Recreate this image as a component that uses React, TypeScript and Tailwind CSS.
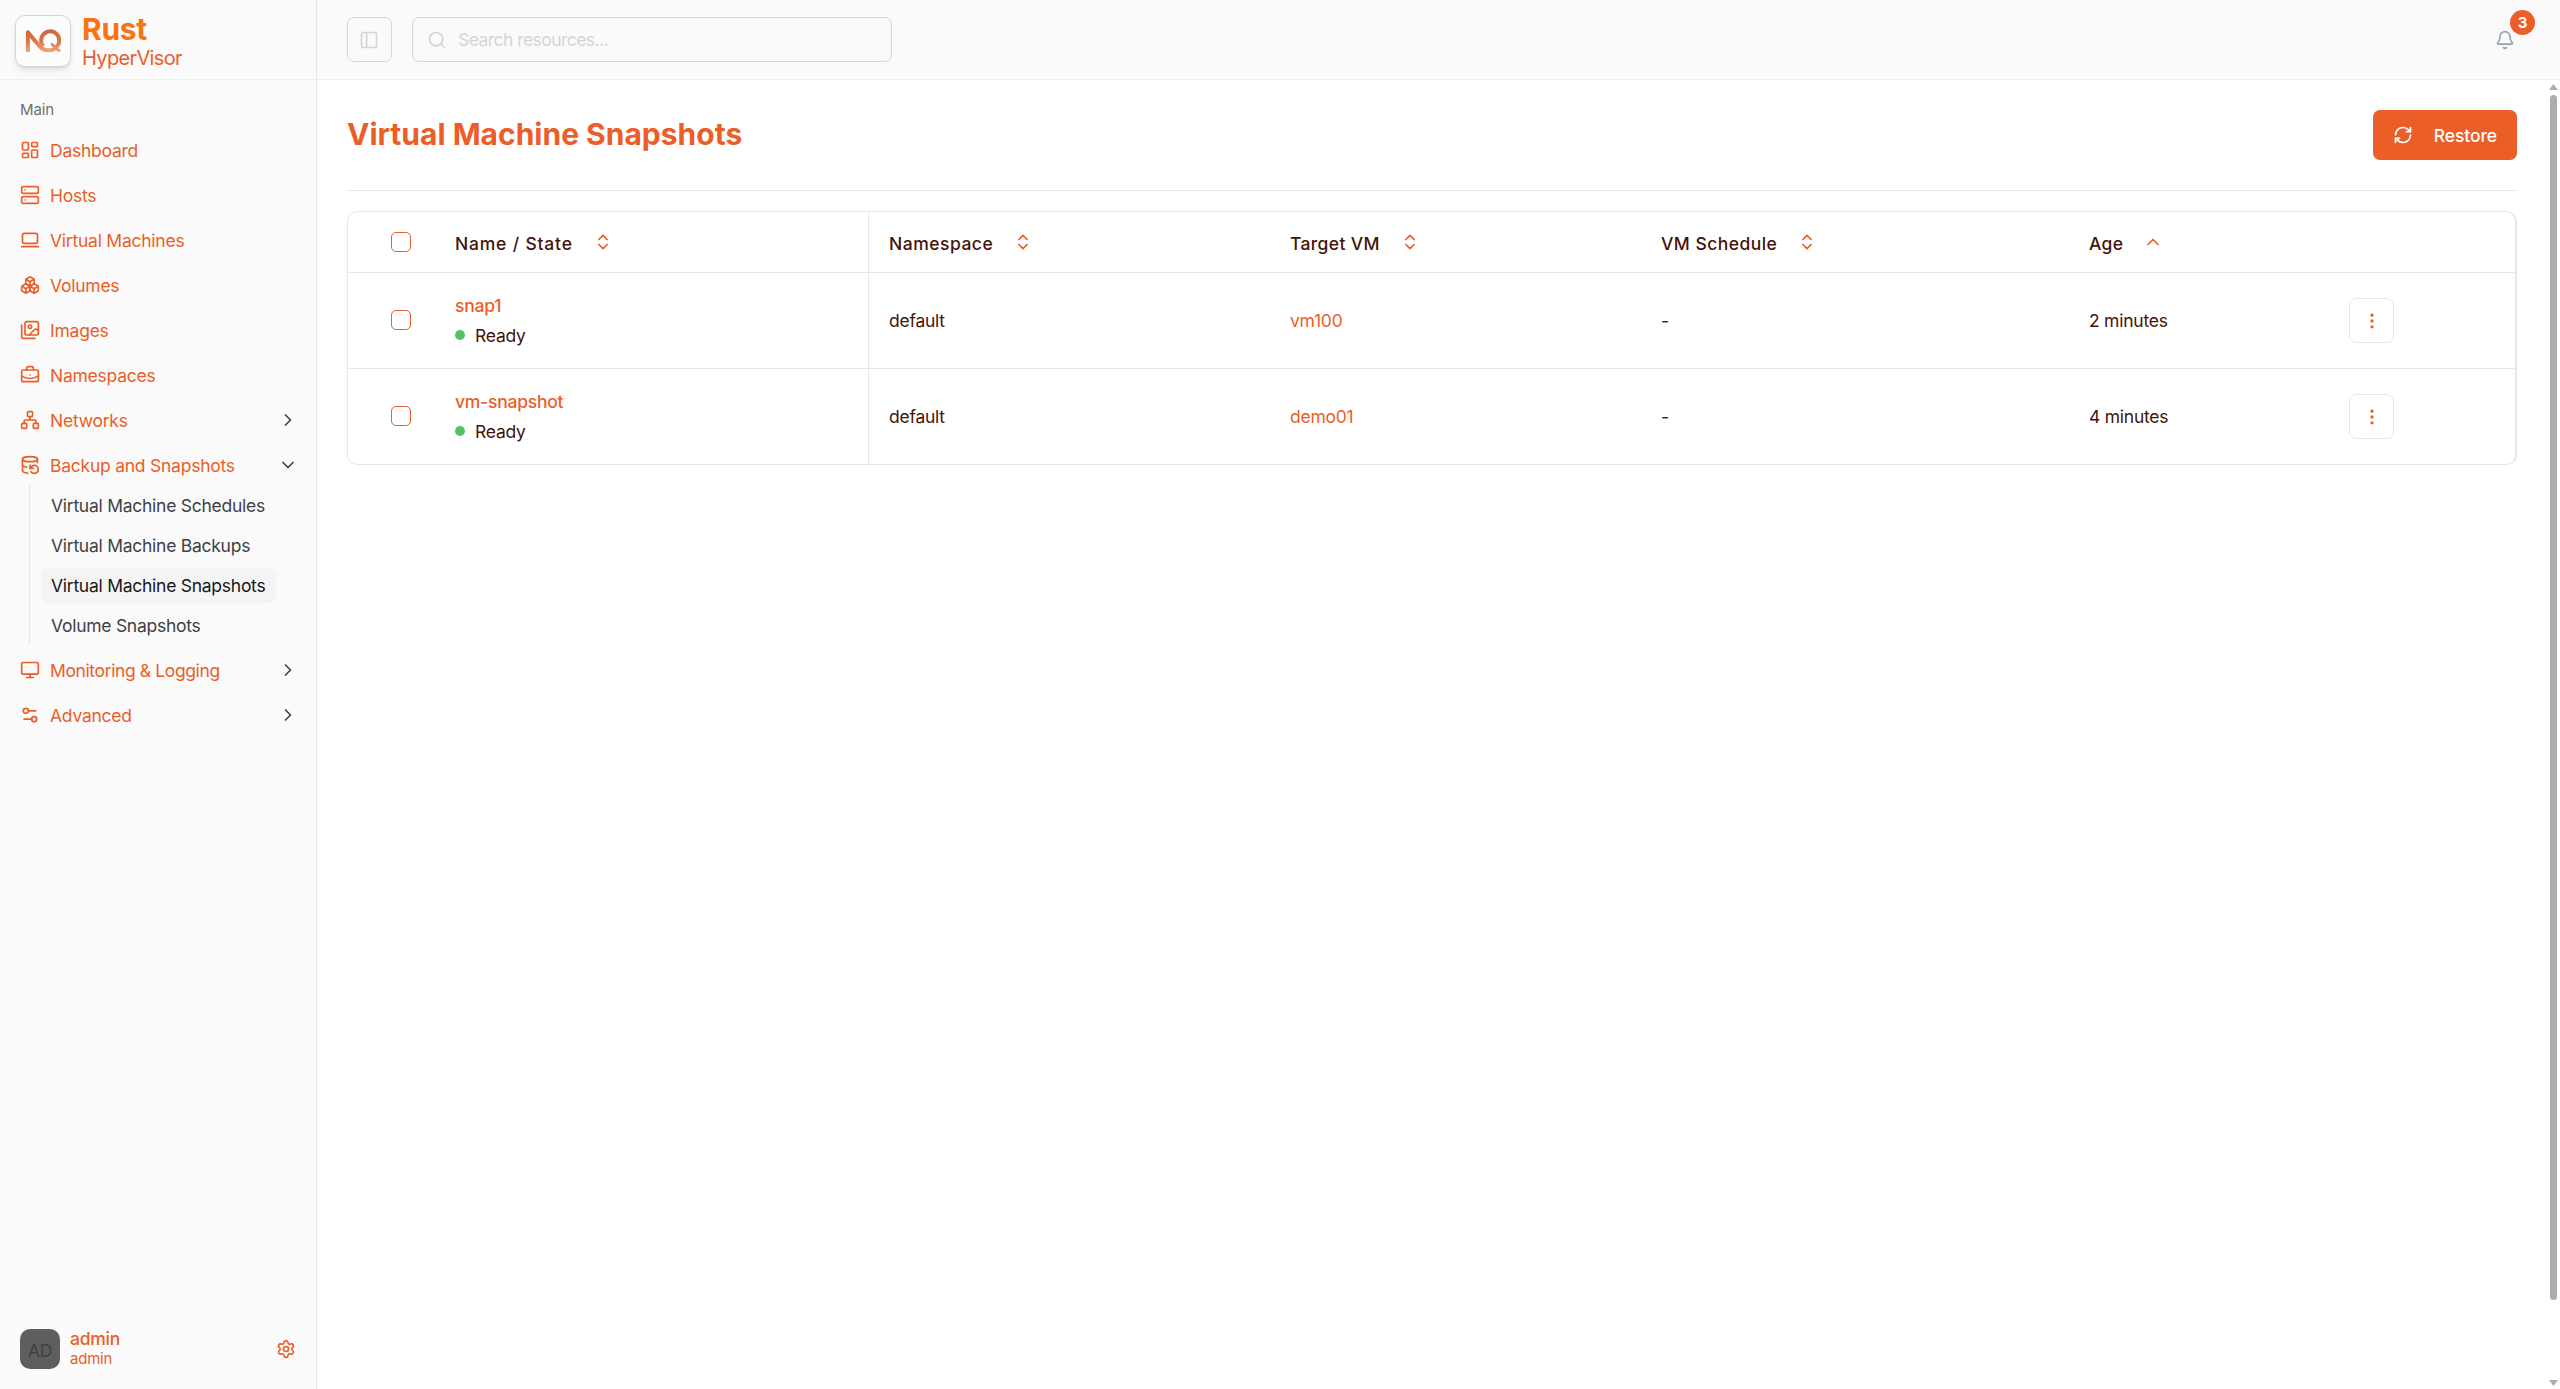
import React, { useState } from "react";
import {
  Bell,
  Boxes,
  BriefcaseBusiness,
  ChevronDown,
  ChevronRight,
  ChevronsUpDown,
  ChevronUp,
  DatabaseBackup,
  EllipsisVertical,
  LaptopMinimal,
  LayoutDashboard,
  Monitor,
  Network,
  PanelLeft,
  RefreshCw,
  Search,
  Server,
  Settings,
  Settings2,
} from "lucide-react";

interface NavItem {
  label: string;
  icon: React.ElementType;
  children?: string[];
  expandable?: boolean;
}

interface Snapshot {
  name: string;
  state: string;
  namespace: string;
  target: string;
  schedule: string;
  age: string;
}

const ImagesIcon = ({ className }: { className?: string }) => (
  <svg
    className={className}
    viewBox="0 0 24 24"
    fill="none"
    stroke="currentColor"
    strokeWidth={2}
    strokeLinecap="round"
    strokeLinejoin="round"
  >
    <path d="M18 22H4a2 2 0 0 1-2-2V6" />
    <path d="m22 13-1.296-1.296a2.41 2.41 0 0 0-3.408 0L11 18" />
    <circle cx="12" cy="8" r="2" />
    <rect width="16" height="16" x="6" y="2" rx="2" />
  </svg>
);

const navItems: NavItem[] = [
  { label: "Dashboard", icon: LayoutDashboard },
  { label: "Hosts", icon: Server },
  { label: "Virtual Machines", icon: LaptopMinimal },
  { label: "Volumes", icon: Boxes },
  { label: "Images", icon: ImagesIcon },
  { label: "Namespaces", icon: BriefcaseBusiness },
  { label: "Networks", icon: Network, expandable: true },
  {
    label: "Backup and Snapshots",
    icon: DatabaseBackup,
    children: [
      "Virtual Machine Schedules",
      "Virtual Machine Backups",
      "Virtual Machine Snapshots",
      "Volume Snapshots",
    ],
  },
  { label: "Monitoring & Logging", icon: Monitor, expandable: true },
  { label: "Advanced", icon: Settings2, expandable: true },
];

const columns = [
  { label: "Name / State", tracking: "tracking-[0.8px]" },
  { label: "Namespace", tracking: "tracking-[0.5px]" },
  { label: "Target VM", tracking: "tracking-[0.35px]" },
  { label: "VM Schedule", tracking: "tracking-[0.45px]" },
  { label: "Age", tracking: "tracking-[0.3px]" },
];

const snapshots: Snapshot[] = [
  { name: "snap1", state: "Ready", namespace: "default", target: "vm100", schedule: "-", age: "2 minutes" },
  { name: "vm-snapshot", state: "Ready", namespace: "default", target: "demo01", schedule: "-", age: "4 minutes" },
];

const Logo = () => (
  <div className="flex h-[52px] w-14 items-center justify-center rounded-[10px] border border-gray-300 bg-[#fcfcfc] shadow-md">
    <svg className="h-6 w-9" viewBox="0 0 36 24" fill="none" strokeWidth="4">
      <defs>
        <linearGradient id="logo" gradientUnits="userSpaceOnUse" x1="0" y1="0" x2="0" y2="24">
          <stop offset="0" stopColor="#cf6435" />
          <stop offset="0.5" stopColor="#dc7646" />
          <stop offset="1" stopColor="#f0a880" />
        </linearGradient>
      </defs>
      <path
        d="M2.9 23V3.2L14.5 17.2C17.5 20.8 20.3 21.6 24.5 21.3"
        stroke="url(#logo)"
        strokeLinejoin="round"
      />
      <path
        d="M18.2 17.2A9.1 9.1 0 1 1 32 17.4C30.2 19.8 27.6 21.3 24.5 21.3"
        stroke="url(#logo)"
      />
      <path d="M26 15.2C28.5 15.4 30.4 20.4 35.2 22.1" stroke="url(#logo)" strokeWidth="2.8" />
    </svg>
  </div>
);

const Sidebar = () => {
  const [active, setActive] = useState("Virtual Machine Snapshots");

  return (
    <aside className="flex w-[317px] shrink-0 flex-col border-r border-[#e5e5e5] bg-[#fafafa]">
      <div className="flex h-20 shrink-0 items-center gap-[11px] border-b border-[#ededed] pl-[15px]">
        <div className="pt-[3px]">
          <Logo />
        </div>
        <div className="pt-[7px]">
          <div className="text-[30px] leading-[30px] font-bold tracking-[-0.3px] text-[#f97310]">Rust</div>
          <div className="text-[20px] leading-[28px] tracking-[-0.65px]">HyperVisor</div>
        </div>
      </div>
      <nav className="grow px-[10px] pt-[9px]">
        <div className="flex h-10 items-center px-[10px] text-[15px] tracking-[-0.1px] text-[#707070]">Main</div>
        <ul className="mt-[1px] flex flex-col gap-[5px]">
          {navItems.map(({ label, icon: Icon, children, expandable }) => (
            <li key={label}>
              <button className="flex h-10 w-full items-center gap-[10px] px-[10px] text-left">
                <Icon className="size-5 shrink-0" />
                <span className={label.startsWith("Monitoring") ? "grow tracking-[-0.38px]" : "grow"}>{label}</span>
                {children && <ChevronDown className="mr-[-2px] size-5 text-[#3f3f46]" />}
                {expandable && <ChevronRight className="mr-[-2px] size-5 text-[#3f3f46]" />}
              </button>
              {children && (
                <ul className="ml-[19px] flex w-[247px] flex-col gap-[5px] border-l border-[#e5e5e5] py-[2.5px] pl-[11px]">
                  {children.map((child) => (
                    <li key={child}>
                      <button
                        className={`flex h-[35px] w-full items-center rounded-[7px] px-[10px] pt-[1px] tracking-[-0.26px] whitespace-nowrap ${
                          active === child ? "bg-[#f4f4f5] text-[#18181b]" : "text-[#3f3f46]"
                        }`}
                        onClick={() => setActive(child)}
                      >
                        {child}
                      </button>
                    </li>
                  ))}
                </ul>
              )}
            </li>
          ))}
        </ul>
      </nav>
      <div className="flex items-center gap-[10px] p-5">
        <div className="flex size-10 items-center justify-center rounded-[10px] bg-[#5e5e5e] pt-[2px] text-[#414141]">AD</div>
        <div className="grow">
          <div className="leading-5 font-medium">admin</div>
          <div className="text-[15px] leading-5">admin</div>
        </div>
        <Settings className="size-5" />
      </div>
    </aside>
  );
};

const Header = () => (
  <header className="flex h-20 shrink-0 items-center border-b border-[#ededed] bg-[#fafafa] pr-[25px] pl-[30px]">
    <button className="flex size-[45px] items-center justify-center rounded-[7px] border border-gray-300 pr-[1px] text-gray-300">
      <PanelLeft className="size-5" />
    </button>
    <div className="ml-5 flex h-[45px] w-[480px] items-center gap-[11px] rounded-[7px] border border-gray-300 pl-[14px] text-gray-300">
      <Search className="size-5" />
      <input
        className="grow bg-transparent tracking-[-0.55px] outline-none placeholder:text-gray-300"
        placeholder="Search resources..."
      />
    </div>
    <button className="relative mr-5 ml-auto text-gray-400">
      <Bell className="size-5" />
      <span className="absolute -top-5 left-[15px] flex size-[25px] items-center justify-center rounded-full bg-[#eb5e28] text-[15px] font-bold text-white">
        3
      </span>
    </button>
  </header>
);

const Checkbox = () => (
  <input
    type="checkbox"
    className="block size-5 appearance-none rounded-[5px] border border-[#eb5e28] checked:bg-[#eb5e28]"
  />
);

const SnapshotTable = () => (
  <div className="mt-5 overflow-hidden rounded-[10px] border border-r-2 border-slate-200">
    <table className="w-full table-fixed border-separate border-spacing-0 text-left text-[#431407]">
      <colgroup>
        <col className="w-[87px]" />
        <col className="w-[434px]" />
        <col className="w-[401px]" />
        <col className="w-[371px]" />
        <col className="w-[428px]" />
        <col className="w-[260px]" />
        <col />
      </colgroup>
      <thead>
        <tr className="h-[61px]">
          <th className="border-b border-slate-200 pl-[43px]">
            <Checkbox />
          </th>
          {columns.map(({ label, tracking }) => (
            <th key={label} className="border-b border-slate-200 px-5 font-medium nth-2:border-r">
              <div className="flex items-center gap-5">
                <span className={`relative top-[1px] ${tracking}`}>{label}</span>
                {label === "Age" ? (
                  <ChevronUp className="size-5 text-[#eb5e28]" />
                ) : (
                  <ChevronsUpDown className="size-5 text-[#eb5e28]" />
                )}
              </div>
            </th>
          ))}
          <th className="border-b border-slate-200" />
        </tr>
      </thead>
      <tbody className="[&>tr:last-child>td]:border-b-0">
        {snapshots.map((snapshot) => (
          <tr key={snapshot.name} className="h-24 last:h-[95px]">
            <td className="border-b border-slate-200 pb-[1px] pl-[43px]">
              <Checkbox />
            </td>
            <td className="border-r border-b border-slate-200 px-5">
              <div className="leading-[25px] font-medium text-[#eb5e28]">{snapshot.name}</div>
              <div className="mt-[5px] flex items-center gap-[10px] leading-[25px]">
                <span className="mb-[1px] size-[10px] rounded-full bg-[#4fc460]" />
                {snapshot.state}
              </div>
            </td>
            <td className="border-b border-slate-200 px-5">{snapshot.namespace}</td>
            <td className="border-b border-slate-200 px-5 text-[#eb5e28]">{snapshot.target}</td>
            <td className="border-b border-slate-200 px-5">{snapshot.schedule}</td>
            <td className="border-b border-slate-200 px-5">{snapshot.age}</td>
            <td className="border-b border-slate-200 px-5">
              <button className="flex size-[45px] items-center justify-center rounded-[7px] border border-slate-200 text-[#eb5e28]">
                <EllipsisVertical className="size-5" />
              </button>
            </td>
          </tr>
        ))}
      </tbody>
    </table>
  </div>
);

const ScrollBar = () => (
  <div className="flex w-[13px] shrink-0 flex-col items-center pt-1 pb-[3px]">
    <svg className="h-[6px] w-[9px] fill-[#adadad]" viewBox="0 0 9 6">
      <path d="M4.5 0 9 6H0z" />
    </svg>
    <div className="mt-[5px] h-[1205px] w-[7px] rounded-full bg-[#adadad]" />
    <svg className="mt-auto h-[6px] w-[9px] fill-[#adadad]" viewBox="0 0 9 6">
      <path d="M0 0H9L4.5 6z" />
    </svg>
  </div>
);

const App = () => {
  return (
    <div className="flex h-screen bg-white font-[Inter,sans-serif] text-[17.5px] leading-[25px] tracking-[-0.24px] text-[#eb5e28]">
      <Sidebar />
      <div className="flex grow flex-col">
        <Header />
        <div className="flex grow">
          <main className="grow p-[30px]">
            <div className="flex items-center justify-between border-b border-slate-200 pb-[30px]">
              <h1 className="pb-[2px] text-[30px] leading-[48px] font-bold tracking-normal">Virtual Machine Snapshots</h1>
              <button className="flex h-[50px] w-36 items-center justify-between rounded-[7px] bg-[#eb5e28] px-5 font-medium text-white">
                <RefreshCw className="size-5" />
                <span className="pt-[1px] tracking-[-0.1px]">Restore</span>
              </button>
            </div>
            <SnapshotTable />
          </main>
          <ScrollBar />
        </div>
      </div>
    </div>
  );
};

App.displayName = "App";

export default App;
